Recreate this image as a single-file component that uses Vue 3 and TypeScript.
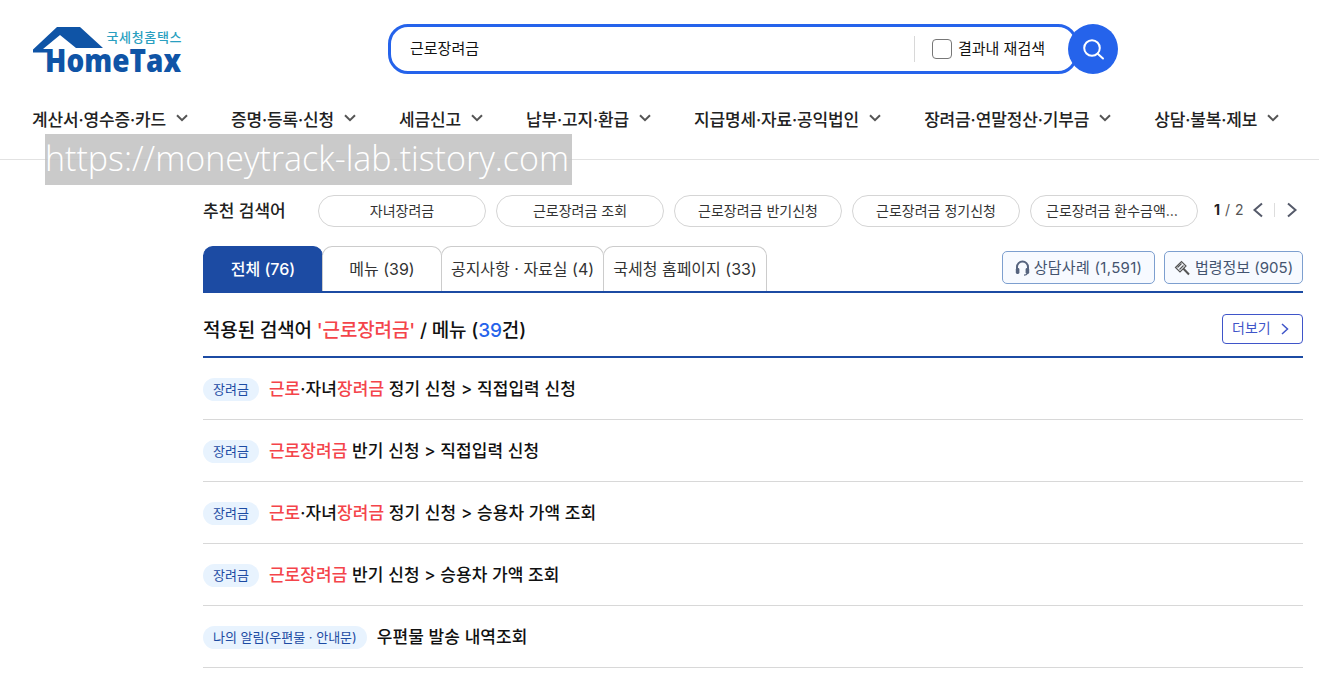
<script setup lang="ts">
type Part = { text: string; hit?: boolean }
type Row = { badge: string; parts: Part[] }

const navItems: string[] = [
  '계산서·영수증·카드',
  '증명·등록·신청',
  '세금신고',
  '납부·고지·환급',
  '지급명세·자료·공익법인',
  '장려금·연말정산·기부금',
  '상담·불복·제보',
]

const chips: string[] = [
  '자녀장려금',
  '근로장려금 조회',
  '근로장려금 반기신청',
  '근로장려금 정기신청',
  '근로장려금 환수금액조회',
]

const tabs: { label: string; cls: string }[] = [
  { label: '전체 (76)', cls: 'tab-all' },
  { label: '메뉴 (39)', cls: 'tab-menu' },
  { label: '공지사항 · 자료실 (4)', cls: 'tab-notice' },
  { label: '국세청 홈페이지 (33)', cls: 'tab-home' },
]

const rows: Row[] = [
  { badge: '장려금', parts: [{ text: '근로', hit: true }, { text: '·자녀' }, { text: '장려금', hit: true }, { text: ' 정기 신청 > 직접입력 신청' }] },
  { badge: '장려금', parts: [{ text: '근로장려금', hit: true }, { text: ' 반기 신청 > 직접입력 신청' }] },
  { badge: '장려금', parts: [{ text: '근로', hit: true }, { text: '·자녀' }, { text: '장려금', hit: true }, { text: ' 정기 신청 > 승용차 가액 조회' }] },
  { badge: '장려금', parts: [{ text: '근로장려금', hit: true }, { text: ' 반기 신청 > 승용차 가액 조회' }] },
  { badge: '나의 알림(우편물 · 안내문)', parts: [{ text: '우편물 발송 내역조회' }] },
]
</script>

<template>
  <div class="page">
    <header class="header">
      <div class="top">
        <svg class="logo" width="150" height="54" viewBox="0 0 150 54">
          <path d="M0 22.500 24 0H47L70 21H43L27 8 10 22H18V25.500H0Z" fill="#0f54a6" />
          <text class="logo-sub" x="73.500" y="14.500" textLength="75">국세청홈택스</text>
          <text class="logo-main" x="12" y="45" textLength="136" lengthAdjust="spacingAndGlyphs">HomeTax</text>
        </svg>
        <div class="search">
          <div class="search-box">
            <span class="query">근로장려금</span>
            <label class="within">
              <span class="check"></span>
              <span class="within-text">결과내 재검색</span>
            </label>
          </div>
          <button class="search-btn" type="button" aria-label="검색">
            <svg width="24" height="24" viewBox="0 0 24 24" fill="none" stroke="#fff" stroke-width="2">
              <circle cx="11" cy="11" r="7.800" />
              <path d="M17 17l5 4.500" stroke-linecap="round" />
            </svg>
          </button>
        </div>
      </div>
      <nav class="nav">
        <a v-for="item in navItems" :key="item" class="nav-item">
          {{ item }}
          <svg width="12" height="8" viewBox="0 0 12 8" fill="none" stroke="#555" stroke-width="2">
            <path d="M1 1.200l5 5 5-5" />
          </svg>
        </a>
      </nav>
      <div class="watermark">https://moneytrack-lab.tistory.com</div>
    </header>

    <main class="content">
      <section class="recommend">
        <strong class="rec-title">추천 검색어</strong>
        <div class="chips">
          <span v-for="chip in chips" :key="chip" class="chip"><span class="chip-text">{{ chip }}</span></span>
        </div>
        <div class="pager">
          <b>1</b><span class="sep">/</span><span class="total">2</span>
          <svg class="prev" width="12" height="16" viewBox="0 0 12 16" fill="none" stroke="#555a6a" stroke-width="2">
            <path d="M10 1.500 2.500 8l7.500 6.500" />
          </svg>
          <i class="pager-line"></i>
          <svg width="12" height="16" viewBox="0 0 12 16" fill="none" stroke="#555a6a" stroke-width="2">
            <path d="M2 1.500 9.500 8 2 14.500" />
          </svg>
        </div>
      </section>

      <section class="tab-bar">
        <div class="tabs">
          <button v-for="tab in tabs" :key="tab.cls" type="button" class="tab" :class="tab.cls">{{ tab.label }}</button>
        </div>
        <div class="tab-links">
          <a class="link-btn link-counsel">
            <svg width="15" height="16" viewBox="0 0 15 16" fill="none" stroke="#55637e">
              <path d="M2 10V7a5.500 5.500 0 0 1 11 0v3" stroke-width="2" />
              <rect x=".8" y="8" width="3.600" height="6" rx="1.400" fill="#55637e" stroke="none" />
              <rect x="10.600" y="8" width="3.600" height="6" rx="1.400" fill="#55637e" stroke="none" />
              <path d="M12.500 13.500c-.8 1.200-2 1.600-3.500 1.600" stroke-width="1.200" />
            </svg>
            <span>상담사례 (1,591)</span>
          </a>
          <a class="link-btn link-law">
            <svg width="17" height="17" viewBox="0 0 17 17" fill="none" stroke="#555" stroke-width="1.200">
              <path d="M1.500 8.500 7.500 2.500l4.500 4.500-6 6Z" />
              <path d="M3.500 8.500 7.500 4.500M5.500 10.500 9.500 6.500" />
              <path d="M9.500 9.800 15 15.500" stroke-width="2" />
            </svg>
            <span>법령정보 (905)</span>
          </a>
        </div>
      </section>

      <section class="result-head">
        <h2 class="result-title">
          적용된 검색어 <span class="red">'근로장려금'</span> / 메뉴 (<span class="blue">39</span>건)
        </h2>
        <a class="more">
          <span>더보기</span>
          <svg width="10" height="12" viewBox="0 0 10 12" fill="none" stroke="#3f55c9" stroke-width="1.500">
            <path d="M2 1l5.500 5L2 11" />
          </svg>
        </a>
      </section>

      <ul class="results">
        <li v-for="(row, i) in rows" :key="i" class="result">
          <span class="badge">{{ row.badge }}</span>
          <span class="result-text">
            <span v-for="(part, j) in row.parts" :key="j" :class="{ red: part.hit }">{{ part.text }}</span>
          </span>
        </li>
      </ul>
    </main>
  </div>
</template>

<style>
html,
body {
  margin: 0;
  overflow: hidden;
  background: #fff;
}
</style>

<style scoped>
.page {
  position: relative;
  height: 673px;
  overflow: hidden;
  font-family: Inter, "Noto Sans CJK KR", sans-serif;
  color: #222;
}
.header {
  height: 160px;
  box-sizing: border-box;
  border-bottom: 1px solid #e2e2e2;
}
.top {
  display: flex;
  align-items: flex-start;
  height: 96px;
  padding: 24px 0 0 33px;
  box-sizing: border-box;
}
.logo {
  margin-top: 3px;
  flex: none;
}
.logo-sub {
  font-size: 13px;
  font-weight: 500;
  fill: #2a9fc0;
}
.logo-main {
  font-family: "Open Sans", sans-serif;
  font-size: 31px;
  font-weight: 800;
  fill: #0f54a6;
}
.search {
  display: flex;
  margin-left: 205px;
}
.search-box {
  width: 690px;
  height: 50px;
  box-sizing: border-box;
  border: 3px solid #2563eb;
  border-radius: 20px;
  display: flex;
  align-items: center;
  justify-content: space-between;
  padding: 0 30px 0 19px;
  font-size: 15px;
  color: #111;
}
.query,
.within-text {
  padding-bottom: 3px;
}
.within {
  display: flex;
  align-items: center;
  gap: 6px;
  height: 26px;
  padding-left: 17px;
  border-left: 1px solid #d8d8d8;
}
.check {
  width: 18px;
  height: 18px;
  border: 1px solid #777;
  border-radius: 4px;
}
.search-btn {
  width: 50px;
  height: 50px;
  margin-left: -10px;
  padding: 0;
  border: 0;
  border-radius: 50%;
  background: #2563eb;
  display: flex;
  align-items: center;
  justify-content: center;
  position: relative;
}
.nav {
  display: flex;
  gap: 43px;
  padding-left: 32px;
  height: 44px;
  align-items: center;
}
.nav-item {
  display: flex;
  align-items: center;
  gap: 10px;
  font-size: 17px;
  font-weight: 500;
  color: #222;
  letter-spacing: -0.14px;
}
.watermark {
  position: absolute;
  left: 45px;
  top: 134px;
  width: 527px;
  height: 51px;
  background: rgba(190, 190, 190, 0.82);
  color: #fff;
  font-family: "Open Sans", sans-serif;
  font-size: 34px;
  font-weight: 300;
  line-height: 48px;
  white-space: nowrap;
}
.content {
  padding: 35px 16px 0 203px;
}
.recommend {
  display: flex;
  align-items: center;
  height: 32px;
}
.rec-title {
  width: 115px;
  padding-bottom: 3px;
  font-size: 17px;
  font-weight: 500;
  color: #222;
}
.chips {
  display: flex;
  gap: 10px;
}
.chip {
  width: 168px;
  height: 32px;
  box-sizing: border-box;
  border: 1px solid #d5d5d5;
  border-radius: 16px;
  display: flex;
  align-items: center;
  justify-content: center;
  padding: 0 15px 3px;
  font-size: 14px;
  color: #333;
}
.chip-text {
  overflow: hidden;
  white-space: nowrap;
  text-overflow: ellipsis;
}
.pager {
  display: flex;
  align-items: center;
  margin-left: 16px;
  padding-bottom: 3px;
  font-size: 14px;
  color: #555;
}
.pager b {
  color: #222;
}
.sep {
  margin: 0 5px;
}
.prev {
  margin-left: 8px;
}
.pager-line {
  width: 1px;
  height: 14px;
  margin-left: 10px;
  margin-right: 11px;
  background: #ddd;
}
.tab-bar {
  display: flex;
  justify-content: space-between;
  align-items: flex-end;
  height: 47px;
  margin-top: 19px;
  box-sizing: border-box;
  border-bottom: 2px solid #1c4ba3;
}
.tabs {
  display: flex;
}
.tab {
  height: 45px;
  padding: 0 0 3px;
  margin-left: -1px;
  box-sizing: border-box;
  background: #fff;
  border: 1px solid #ccc;
  border-bottom: 0;
  border-radius: 10px 10px 0 0;
  font: inherit;
  font-size: 16px;
  color: #333;
}
.tab-all {
  width: 120px;
  margin-left: 0;
  background: #1c4ba3;
  border-color: #1c4ba3;
  color: #fff;
  font-weight: 500;
}
.tab-menu {
  width: 120px;
}
.tab-notice {
  width: 163px;
}
.tab-home {
  width: 164px;
}
.tab-links {
  display: flex;
  gap: 9px;
  margin-bottom: 7px;
}
.link-btn {
  height: 33px;
  box-sizing: border-box;
  display: flex;
  align-items: center;
  justify-content: center;
  gap: 4px;
  border: 1px solid #7d9fcf;
  border-radius: 5px;
  background: #f7faff;
  font-size: 15px;
  color: #44546f;
}
.link-btn span {
  padding-bottom: 3px;
}
.link-counsel {
  width: 153px;
  letter-spacing: 0.3px;
}
.link-law {
  width: 139px;
}
.result-head {
  display: flex;
  align-items: center;
  justify-content: space-between;
  height: 65px;
  padding-top: 8px;
  box-sizing: border-box;
  border-bottom: 2px solid #1c4ba3;
}
.result-title {
  margin: 0;
  font-size: 19px;
  font-weight: 500;
  letter-spacing: -0.15px;
  color: #111;
}
.red {
  color: #f4444a;
}
.blue {
  color: #2563eb;
}
.more {
  width: 81px;
  height: 30px;
  box-sizing: border-box;
  display: flex;
  align-items: center;
  gap: 9px;
  padding-left: 9px;
  border: 1px solid #3f55c9;
  border-radius: 4px;
  font-size: 14px;
  color: #3f55c9;
}
.more span {
  padding-bottom: 3px;
}
.results {
  list-style: none;
  margin: 0;
  padding: 0;
}
.result {
  height: 62px;
  box-sizing: border-box;
  display: flex;
  align-items: center;
  gap: 10px;
  border-bottom: 1px solid #d8d8d8;
}
.badge {
  height: 23px;
  margin-top: 2px;
  padding: 0 10px;
  border-radius: 12px;
  background: #e8f3fe;
  color: #1c4ba3;
  font-size: 13px;
  line-height: 22px;
}
.result-text {
  font-size: 17px;
  font-weight: 500;
  letter-spacing: 0.08px;
  color: #111;
  white-space: pre-wrap;
  margin-top: -3px;
}
</style>
